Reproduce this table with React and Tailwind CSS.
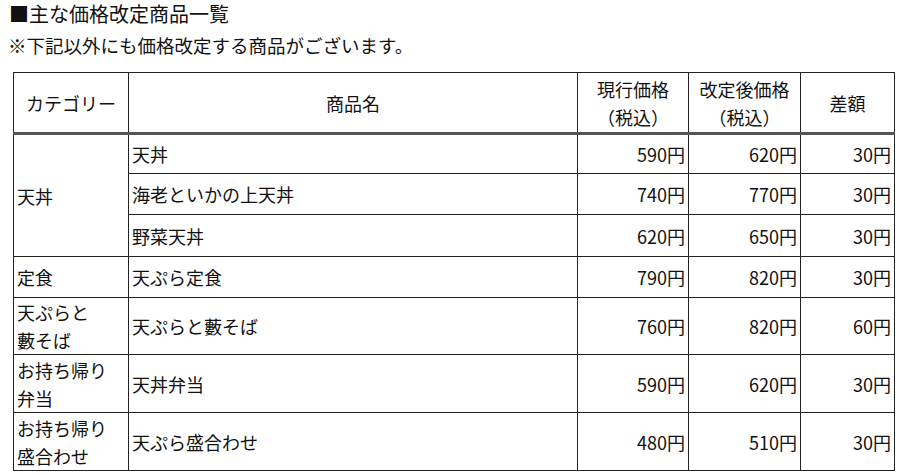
import React from "react";

const rows = [
  { cat: "天丼", span: 3, name: "天丼", cur: "590円", next: "620円", diff: "30円", h: "h-[40px]" },
  { name: "海老といかの上天丼", cur: "740円", next: "770円", diff: "30円", h: "h-[41px]" },
  { name: "野菜天丼", cur: "620円", next: "650円", diff: "30円", h: "h-[42px]" },
  { cat: "定食", span: 1, name: "天ぷら定食", cur: "790円", next: "820円", diff: "30円", h: "h-[41px]" },
  { cat: ["天ぷらと", "藪そば"], span: 1, name: "天ぷらと藪そば", cur: "760円", next: "820円", diff: "60円", h: "h-[57px]" },
  { cat: ["お持ち帰り", "弁当"], span: 1, name: "天丼弁当", cur: "590円", next: "620円", diff: "30円", h: "h-[58px]" },
  { cat: ["お持ち帰り", "盛合わせ"], span: 1, name: "天ぷら盛合わせ", cur: "480円", next: "510円", diff: "30円", h: "h-[58px]" },
];

export default function App() {
  return (
    <div
      className="w-[900px] h-[475px] bg-white text-[#111] overflow-hidden"
      style={{ fontFamily: '"Noto Sans CJK JP", "Noto Sans", sans-serif' }}
    >
      <div className="pl-[9px] text-[20px] leading-[28px] whitespace-nowrap">■主な価格改定商品一覧</div>
      <div className="pl-[8px] mt-[4px] text-[18.5px] leading-[26px] whitespace-nowrap">※下記以外にも価格改定する商品がございます。</div>
      <table className="ml-[13px] mt-[14px] w-[881px] table-fixed border-collapse text-[18px] leading-[28px]">
        <colgroup>
          <col className="w-[115px]" />
          <col className="w-[449px]" />
          <col className="w-[111px]" />
          <col className="w-[112px]" />
          <col className="w-[94px]" />
        </colgroup>
        <thead>
          <tr className="h-[61px]">
            <th className="border border-[#222] border-b-[3px] border-b-[#555] font-normal text-center px-[2px]">カテゴリー</th>
            <th className="border border-[#222] border-b-[3px] border-b-[#555] font-normal text-center px-[2px]">商品名</th>
            <th className="border border-[#222] border-b-[3px] border-b-[#555] font-normal text-center px-[1px]">
              <div>現行価格</div>
              <div>（税込）</div>
            </th>
            <th className="border border-[#222] border-b-[3px] border-b-[#555] font-normal text-center px-[1px]">
              <div>改定後価格</div>
              <div>（税込）</div>
            </th>
            <th className="border border-[#222] border-b-[3px] border-b-[#555] font-normal text-center px-[1px]">差額</th>
          </tr>
        </thead>
        <tbody>
          {rows.map((r, i) => (
            <tr key={i} className={r.h}>
              {r.cat !== undefined && (
                <td rowSpan={r.span} className="border border-[#222] pl-[3px] pr-0 align-middle whitespace-nowrap">
                  {Array.isArray(r.cat) ? r.cat.map((c, j) => <div key={j}>{c}</div>) : r.cat}
                </td>
              )}
              <td className="border border-[#222] pl-[3px] align-middle">{r.name}</td>
              <td className="border border-[#222] pr-[3px] text-right align-middle">{r.cur}</td>
              <td className="border border-[#222] pr-[3px] text-right align-middle">{r.next}</td>
              <td className="border border-[#222] pr-[3px] text-right align-middle">{r.diff}</td>
            </tr>
          ))}
        </tbody>
      </table>
    </div>
  );
}
